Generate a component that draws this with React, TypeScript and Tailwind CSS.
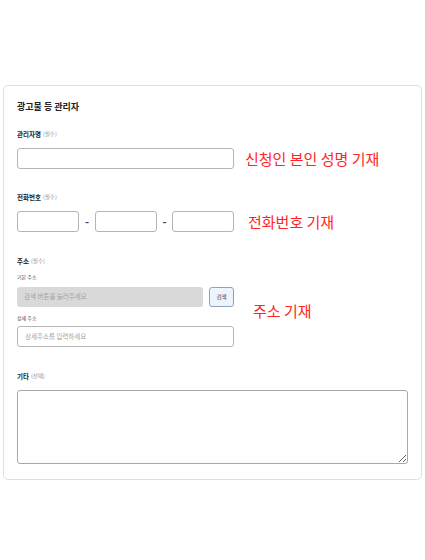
const font = { fontFamily: '"Noto Sans CJK KR", "Noto Sans", sans-serif' };

const Label = ({ title, note }: { title: string; note: string }) => (
  <div className="flex h-[10px] items-center gap-[2px]">
    <span className="text-[6.5px] font-bold leading-[10px] text-[#222]">{title}</span>
    <span className="text-[5.5px] leading-[10px] text-[#888]">{note}</span>
  </div>
);

const Note = ({ children, className = "" }: { children: string; className?: string }) => (
  <span className={`whitespace-nowrap text-[15px] leading-none text-[#ff2424] ${className}`}>{children}</span>
);

const inputBox = "rounded-[3px] border border-[#b5b5b5] bg-white";

export default function App() {
  return (
    <div className="min-h-[560px] bg-white pt-[85px]" style={font}>
      <div className="mx-[3px] w-[419px] rounded-[5px] border border-[#e0e0e0] px-[13px] pb-[15px] pt-[15px]">
        <h2 className="h-[12px] text-[9px] font-bold leading-[12px] text-[#222]">광고물 등 관리자</h2>

        <div className="mt-[16px]">
          <Label title="관리자명" note="(필수)" />
          <div className="mt-[9px] flex items-center">
            <div className={`${inputBox} h-[21px] w-[217px]`} />
            <Note className="ml-[11px]">신청인 본인 성명 기재</Note>
          </div>
        </div>

        <div className="mt-[23px]">
          <Label title="전화번호" note="(필수)" />
          <div className="mt-[9px] flex items-center">
            <div className="flex w-[217px] items-center">
              <div className={`${inputBox} h-[21px] w-[62px]`} />
              <span className="w-[16px] text-center text-[11px] font-bold text-[#444]">-</span>
              <div className={`${inputBox} h-[21px] w-[62px]`} />
              <span className="w-[15px] text-center text-[11px] font-bold text-[#444]">-</span>
              <div className={`${inputBox} h-[21px] w-[62px]`} />
            </div>
            <Note className="ml-[14px]">전화번호 기재</Note>
          </div>
        </div>

        <div className="mt-[24px]">
          <Label title="주소" note="(필수)" />
          <div className="flex items-center">
            <div className="w-[217px]">
              <div className="mt-[7px] h-[8px] text-[5px] leading-[8px] text-[#444]">기본 주소</div>
              <div className="mt-[6px] flex gap-[6px]">
                <div className="flex h-[20px] flex-1 items-center rounded-[3px] bg-[#d9d9d9] px-[7px] text-[6.5px] text-[#a3a3a3]">
                  검색 버튼을 눌러주세요
                </div>
                <button className="h-[20px] w-[25px] rounded-[3px] border border-[#8fa3b8] bg-[#eef4fb] text-[5.5px] text-[#333]">
                  검색
                </button>
              </div>
              <div className="mt-[7px] h-[8px] text-[5px] leading-[8px] text-[#444]">상세 주소</div>
              <div className={`${inputBox} mt-[4px] flex h-[21px] items-center px-[7px] text-[6.5px] text-[#a3a3a3]`}>
                상세주소를 입력하세요
              </div>
            </div>
            <Note className="ml-[19px] mt-[8px]">주소 기재</Note>
          </div>
        </div>

        <div className="mt-[24px]">
          <Label title="기타" note="(선택)" />
          <textarea className="mt-[9px] block h-[74px] w-[391px] rounded-[3px] border border-[#a8a8a8] bg-white" />
        </div>
      </div>
    </div>
  );
}
